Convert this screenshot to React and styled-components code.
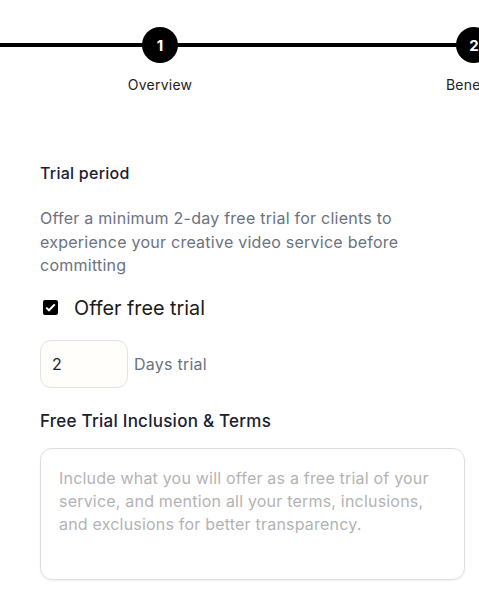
import styled, { createGlobalStyle } from "styled-components";

const GlobalStyle = createGlobalStyle`
  body {
    margin: 0;
    background: #ffffff;
    font-family: Inter, "Noto Sans", sans-serif;
    overflow: hidden;
  }
`;

const Page = styled.div`
  width: 479px;
  height: 598px;
  overflow: hidden;
`;

const Stepper = styled.div`
  position: relative;
  display: flex;
  padding-left: 3px;
  padding-top: 27px;
  height: 100px;
  box-sizing: border-box;

  &::before {
    content: "";
    position: absolute;
    left: 0;
    right: -400px;
    top: 43px;
    height: 4px;
    background: #000;
  }
`;

const Step = styled.div`
  flex: 0 0 314px;
  display: flex;
  flex-direction: column;
  align-items: center;
  position: relative;
`;

const Circle = styled.div`
  width: 36px;
  height: 36px;
  border-radius: 50%;
  background: #000;
  color: #fff;
  display: flex;
  align-items: center;
  justify-content: center;
  font-size: 15px;
  font-weight: 700;
`;

const StepLabel = styled.div`
  margin-top: 13px;
  font-size: 14px;
  color: #222;
  letter-spacing: 0.25px;
  white-space: nowrap;
`;

const Content = styled.div`
  padding: 64px 14px 0 40px;
  display: flex;
  flex-direction: column;
  letter-spacing: 0.25px;
`;

const Heading = styled.h3`
  margin: 0;
  font-size: 16px;
  font-weight: 500;
  color: #1b2030;
  line-height: 18px;
`;

const Description = styled.p`
  margin: 25px 0 0;
  font-size: 16px;
  line-height: 23.5px;
  color: #6b7280;
  max-width: 390px;
`;

const CheckRow = styled.label`
  display: flex;
  align-items: center;
  gap: 16px;
  margin-top: 18px;
  padding-left: 3px;
  font-size: 19.8px;
  letter-spacing: 0;
  color: #1a1a1a;
`;

const Box = styled.span`
  width: 15px;
  height: 15px;
  border-radius: 2px;
  background: #000;
  display: flex;
  align-items: center;
  justify-content: center;
`;

const DaysRow = styled.div`
  display: flex;
  align-items: center;
  gap: 6px;
  margin-top: 20px;
`;

const DaysInput = styled.div`
  width: 88px;
  height: 48px;
  box-sizing: border-box;
  border: 1px solid #e3e3e3;
  border-radius: 11px;
  background: #fffefb;
  padding-left: 11px;
  display: flex;
  align-items: center;
  font-size: 16px;
  color: #222;
`;

const Muted = styled.span`
  font-size: 16px;
  color: #6b7280;
`;

const SubHeading = styled(Heading)`
  margin-top: 24px;
  font-size: 17px;
`;

const TextArea = styled.div`
  margin-top: 18px;
  width: 425px;
  height: 132px;
  box-sizing: border-box;
  border: 1px solid #dedede;
  border-radius: 12px;
  box-shadow: 0 1px 2px rgba(0, 0, 0, 0.06);
  padding: 18px 20px 18px 18px;
  font-size: 16px;
  letter-spacing: 0.2px;
  line-height: 23px;
  color: #b3b3b3;
`;

export default function App() {
  return (
    <Page>
      <GlobalStyle />
      <Stepper>
        <Step>
          <Circle>1</Circle>
          <StepLabel>Overview</StepLabel>
        </Step>
        <Step>
          <Circle>2</Circle>
          <StepLabel>Benefits</StepLabel>
        </Step>
      </Stepper>
      <Content>
        <Heading>Trial period</Heading>
        <Description>
          Offer a minimum 2-day free trial for clients to experience your
          creative video service before committing
        </Description>
        <CheckRow>
          <Box>
            <svg width="11" height="9" viewBox="0 0 11 9">
              <path d="M1.2 4.6 L4 7.3 L9.8 1.4" stroke="#fff" strokeWidth="2" fill="none" />
            </svg>
          </Box>
          Offer free trial
        </CheckRow>
        <DaysRow>
          <DaysInput>2</DaysInput>
          <Muted>Days trial</Muted>
        </DaysRow>
        <SubHeading>Free Trial Inclusion &amp; Terms</SubHeading>
        <TextArea>
          Include what you will offer as a free trial of your service, and
          mention all your terms, inclusions, and exclusions for better
          transparency.
        </TextArea>
      </Content>
    </Page>
  );
}
